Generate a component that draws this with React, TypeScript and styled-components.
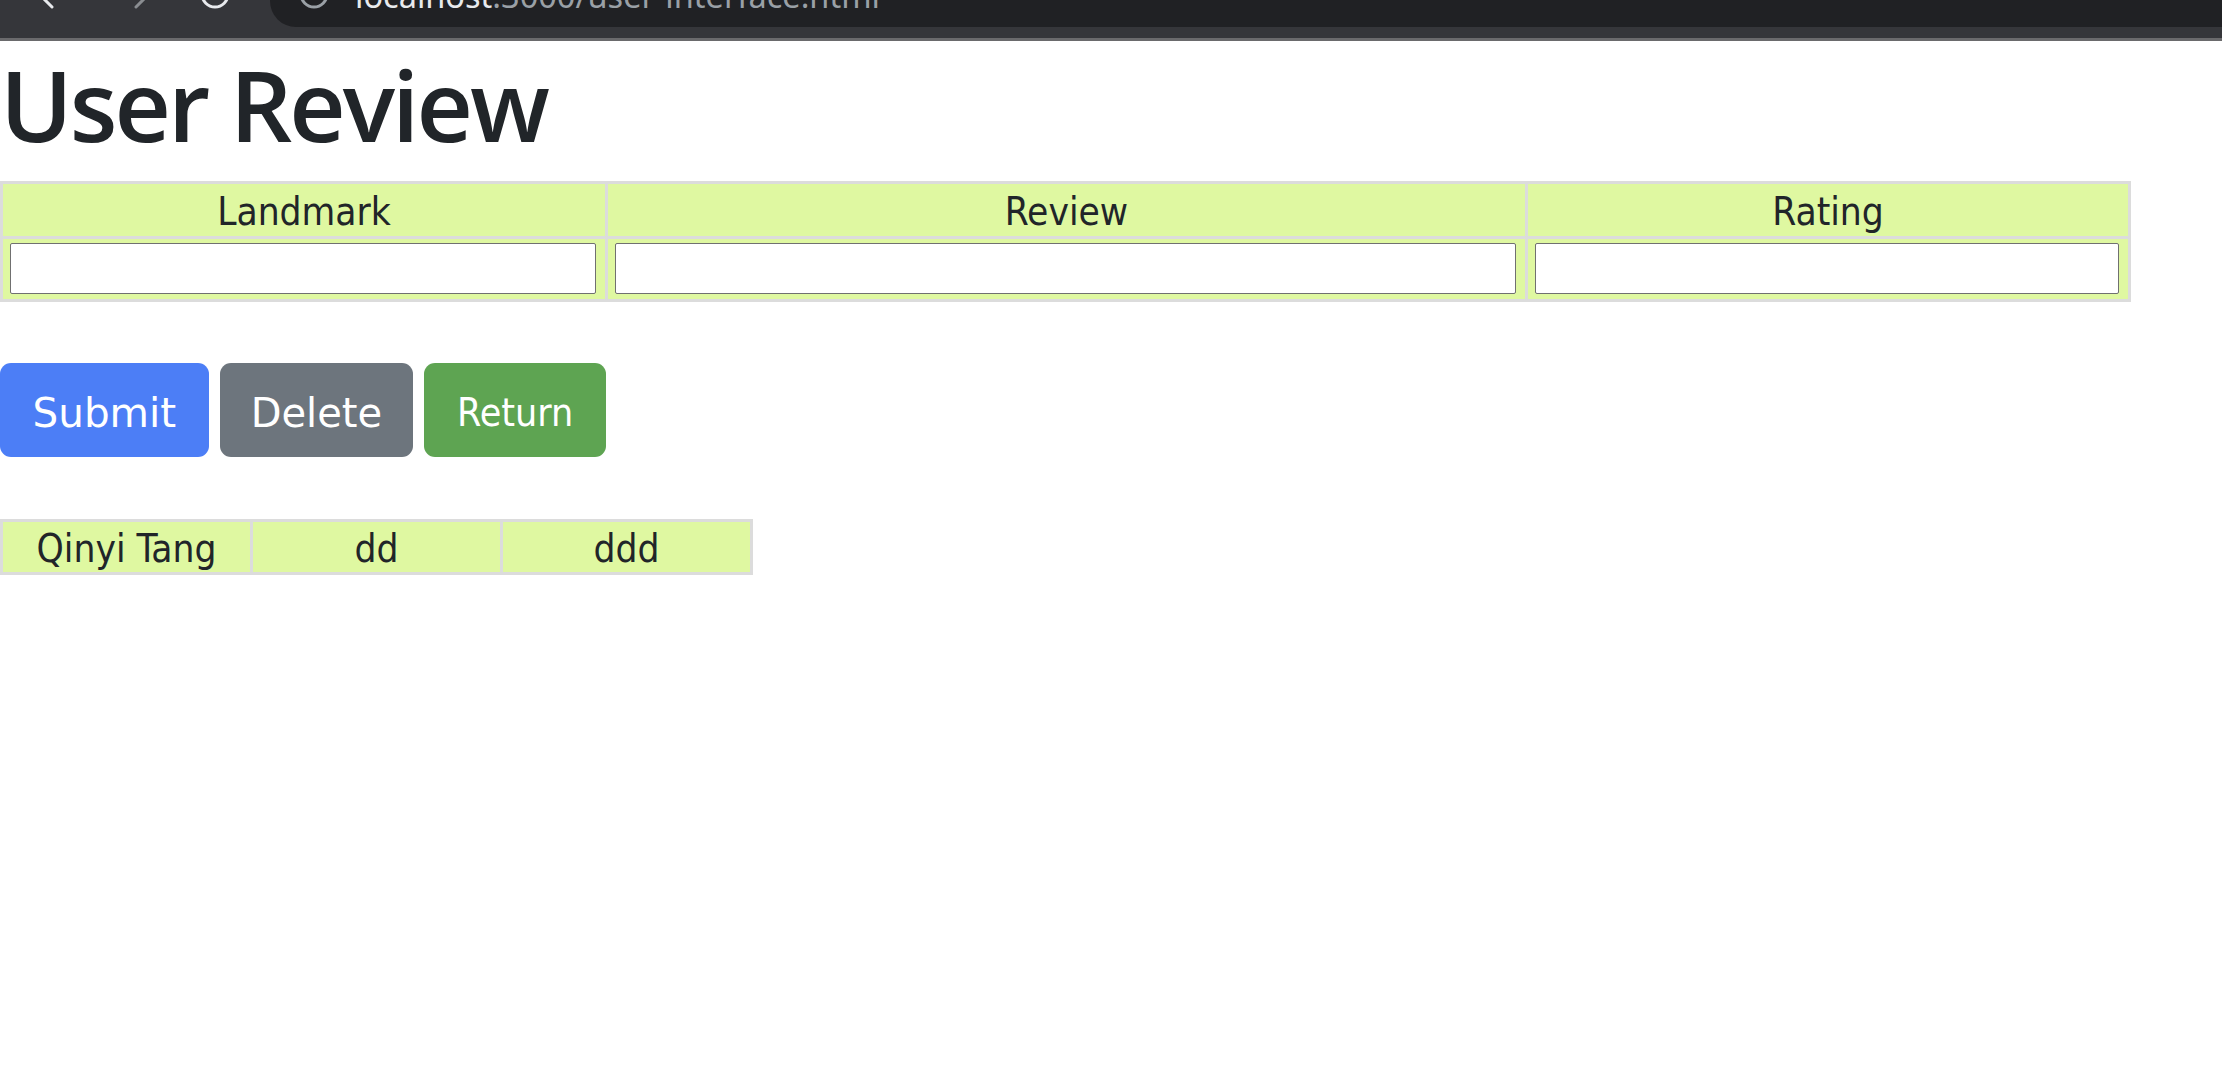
import React from "react";
import styled, { createGlobalStyle } from "styled-components";

const Global = createGlobalStyle`
  html, body { margin: 0; padding: 0; background: #ffffff; }
  body { font-family: "DejaVu Sans", sans-serif; color: #212529; }
  * { box-sizing: border-box; }
`;

const BrowserBar = styled.div`
  display: flex;
  height: 41px;
  background: #35363a;
  border-bottom: 3px solid #6a6a6c;
  overflow: hidden;
`;

const NavIcons = styled.svg`
  flex: 0 0 270px;
  height: 38px;
  display: block;
`;

const Omnibox = styled.div`
  flex: 1;
  display: flex;
  align-items: flex-start;
  height: 27px;
  background: #202124;
  border-bottom-left-radius: 26px;
  overflow: hidden;
`;

const InfoIcon = styled.svg`
  flex: 0 0 80px;
  height: 27px;
  display: block;
`;

const UrlText = styled.div`
  margin-top: -20px;
  margin-left: 5px;
  font-family: "Noto Sans", "Open Sans", sans-serif;
  font-size: 32.5px;
  line-height: 32px;
  white-space: nowrap;
`;

const Host = styled.span`
  color: #e8eaed;
`;

const UrlPath = styled.span`
  color: #9aa0a6;
`;

const Page = styled.main`
  display: flex;
  flex-direction: column;
  align-items: flex-start;
`;

const Title = styled.h1`
  margin: 4px 0 18px 0;
  font-family: "Open Sans", "Noto Sans", sans-serif;
  font-weight: 600;
  font-size: 98px;
  line-height: 118px;
  letter-spacing: -3px;
  color: #212529;
`;

const Grid = styled.div<{ $cols: string; $rows: string }>`
  display: grid;
  grid-template-columns: ${(p) => p.$cols};
  grid-template-rows: ${(p) => p.$rows};
  gap: 3px;
  padding: 3px;
  background: #dcdcdc;
`;

const Cell = styled.div`
  background: #dff8a1;
  display: flex;
  align-items: center;
  justify-content: center;
  padding-top: 2px;
  font-family: "DejaVu Sans Condensed", "DejaVu Sans", sans-serif;
  font-stretch: condensed;
  font-size: 38.5px;
  color: #212529;
`;

const InputCell = styled.div`
  background: #dff8a1;
  padding: 4px 9px 5px 7px;
  display: flex;
`;

const TextInput = styled.input`
  width: 100%;
  height: 51px;
  border: 1px solid #707070;
  border-radius: 2px;
  background: #ffffff;
  padding: 0 6px;
  font-size: 30px;
`;

const ButtonRow = styled.div`
  display: flex;
  gap: 11px;
  margin-top: 61px;
  margin-bottom: 62px;
`;

const variants = {
  primary: { bg: "#4c7ef6", font: '"DejaVu Sans", sans-serif', size: "40.5px", pad: "32.5px", stretch: "normal" },
  secondary: { bg: "#6d757d", font: '"DejaVu Sans", sans-serif', size: "40px", pad: "31px", stretch: "normal" },
  success: { bg: "#5ea452", font: '"DejaVu Sans Condensed", "DejaVu Sans", sans-serif', size: "39px", pad: "33px", stretch: "condensed" },
};

type Variant = keyof typeof variants;

const Button = styled.button<{ $variant: Variant }>`
  height: 94px;
  padding: 5px ${(p) => variants[p.$variant].pad} 0;
  border: none;
  border-radius: 11px;
  background: ${(p) => variants[p.$variant].bg};
  color: #ffffff;
  font-family: ${(p) => variants[p.$variant].font};
  font-stretch: ${(p) => variants[p.$variant].stretch};
  font-size: ${(p) => variants[p.$variant].size};
  display: flex;
  align-items: center;
  justify-content: center;
  cursor: pointer;
`;

export default function App() {
  return (
    <>
      <Global />
      <BrowserBar>
        <NavIcons viewBox="0 0 270 38">
          <path d="M42 -3 L52 7" stroke="#e8eaed" strokeWidth="3" strokeLinecap="round" fill="none" />
          <path d="M146 -3 L136 7" stroke="#8a8d91" strokeWidth="3" strokeLinecap="round" fill="none" />
          <circle cx="215" cy="-6" r="13" stroke="#e8eaed" strokeWidth="3" fill="none" />
        </NavIcons>
        <Omnibox>
          <InfoIcon viewBox="0 0 80 27">
            <circle cx="44" cy="-6" r="13" stroke="#9aa0a6" strokeWidth="3" fill="none" />
          </InfoIcon>
          <UrlText>
            <Host>localhost</Host>
            <UrlPath>:3000/user-interface.html</UrlPath>
          </UrlText>
        </Omnibox>
      </BrowserBar>
      <Page>
        <Title>User Review</Title>
        <Grid $cols="602px 917px 600px" $rows="52px 60px">
          <Cell>Landmark</Cell>
          <Cell>Review</Cell>
          <Cell>Rating</Cell>
          <InputCell>
            <TextInput type="text" />
          </InputCell>
          <InputCell>
            <TextInput type="text" />
          </InputCell>
          <InputCell>
            <TextInput type="text" />
          </InputCell>
        </Grid>
        <ButtonRow>
          <Button $variant="primary">Submit</Button>
          <Button $variant="secondary">Delete</Button>
          <Button $variant="success">Return</Button>
        </ButtonRow>
        <Grid $cols="247px 247px 247px" $rows="50px">
          <Cell>Qinyi Tang</Cell>
          <Cell>dd</Cell>
          <Cell>ddd</Cell>
        </Grid>
      </Page>
    </>
  );
}
